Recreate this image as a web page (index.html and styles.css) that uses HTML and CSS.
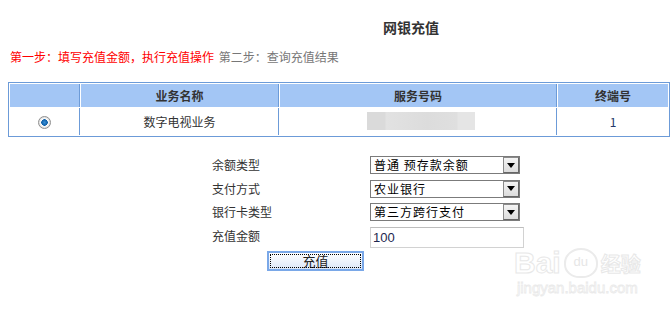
FILE: index.html
```html
<!DOCTYPE html>
<html lang="zh-CN">
<head>
  <meta charset="UTF-8">
  <title>网银充值</title>
  <link rel="stylesheet" href="styles.css">
</head>
<body>
  <div class="page">
    <div class="title">网银充值</div>
    <div class="steps">
      <span class="step-on">第一步：填写充值金额，执行充值操作</span>
      <span class="step-off">第二步：查询充值结果</span>
    </div>

    <table class="biz">
      <tr class="head">
        <td class="c1"></td>
        <td class="c2">业务名称</td>
        <td class="c3">服务号码</td>
        <td class="c4">终端号</td>
      </tr>
      <tr class="data">
        <td class="c1"><span class="radio"></span></td>
        <td class="c2">数字电视业务</td>
        <td class="c3"><span class="masked"></span></td>
        <td class="c4 num">1</td>
      </tr>
    </table>

    <div class="form">
      <div class="row">
        <span class="label">余额类型</span>
        <div class="select"><span class="val">普通 预存款余额</span><span class="arrow"><svg width="8" height="5" viewBox="0 0 8 5"><path d="M0 0h8L4 5z" fill="#000"/></svg></span></div>
      </div>
      <div class="row">
        <span class="label">支付方式</span>
        <div class="select"><span class="val">农业银行</span><span class="arrow"><svg width="8" height="5" viewBox="0 0 8 5"><path d="M0 0h8L4 5z" fill="#000"/></svg></span></div>
      </div>
      <div class="row">
        <span class="label">银行卡类型</span>
        <div class="select"><span class="val">第三方跨行支付</span><span class="arrow"><svg width="8" height="5" viewBox="0 0 8 5"><path d="M0 0h8L4 5z" fill="#000"/></svg></span></div>
      </div>
      <div class="row">
        <span class="label">充值金额</span>
        <input class="amount" type="text" value="100">
      </div>
      <button class="submit">充值</button>
    </div>

    <div class="watermark">
      <div class="wm-logo"><span class="wm-bai">Bai</span><span class="wm-du">du</span><span class="wm-jy">经验</span></div>
      <div class="wm-url">jingyan.baidu.com</div>
    </div>
  </div>
</body>
</html>
```

FILE: styles.css
```css
body {
  margin: 0;
  font-family: "Noto Sans CJK SC", "Liberation Sans", sans-serif;
  font-size: 12px;
  color: #333;
  background: #fff;
}
.page {
  position: relative;
  padding: 20px 0 0 8px;
  height: 298px;
}
.title {
  padding-left: 375px;
  font-size: 14px;
  font-weight: bold;
  line-height: 14px;
}
.steps {
  margin-top: 16px;
  padding-left: 2px;
  line-height: 14px;
}
.step-on {
  color: #ff0000;
}
.step-off {
  color: #777;
  margin-left: 2px;
}
.biz {
  margin-top: 18px;
  width: 662px;
  table-layout: fixed;
  border: 1px solid #6c9bd8;
  border-collapse: separate;
  border-spacing: 1px;
}
.biz td {
  box-sizing: border-box;
  padding: 0;
  text-align: center;
  border-right: 1px solid #6c9bd8;
}
.biz td.c4 {
  border-right: none;
}
.c1 { width: 70px; }
.c2 { width: 198px; }
.c3 { width: 277px; }
.c4 { width: 110px; }
.head td {
  height: 23px;
  background: #a3c6f5;
  font-weight: bold;
}
.data td {
  height: 27px;
}
.num {
  color: #24386a;
}
.radio {
  display: inline-block;
  width: 11px;
  height: 11px;
  border-radius: 50%;
  border: 1px solid #8f8f8f;
  background: radial-gradient(circle, #3a8fd6 0, #0d5fa8 3px, #fff 3.5px, #e6e6e6 5px);
  vertical-align: middle;
  margin-top: -2px;
}
.masked {
  display: inline-block;
  width: 108px;
  height: 18px;
  margin: 0 0 2px 5px;
  vertical-align: middle;
  background: linear-gradient(to right, #dadada 0, #dadada 18px, #e2e2e2 19px, #dcdcdc 60px, #dfdfdf 90px, #e5e5e5 91px);
}
.form {
  margin: 19px 0 0 204px;
}
.row {
  display: flex;
  align-items: flex-start;
  height: 23.5px;
}
.label {
  width: 158px;
  line-height: 18px;
}
.select {
  box-sizing: border-box;
  width: 150px;
  height: 18px;
  border: 1px solid #7b7b7b;
  display: flex;
  align-items: center;
  justify-content: space-between;
  background: #fff;
  color: #000;
}
.val {
  padding-left: 3px;
  letter-spacing: 1px;
  line-height: 16px;
}
.arrow {
  box-sizing: border-box;
  width: 16px;
  height: 16px;
  border: 1px solid #8a8a8a;
  border-right-color: #666;
  border-bottom-color: #666;
  background: linear-gradient(#f4f4f4, #dcdcdc);
  display: flex;
  align-items: center;
  justify-content: center;
}
.amount {
  box-sizing: border-box;
  width: 154px;
  height: 21px;
  margin: 0;
  padding: 0 2px;
  border: 1px solid #d2d2d2;
  border-top-color: #bdbdbd;
  font-family: "Liberation Sans", sans-serif;
  font-size: 13px;
  color: #1e2850;
}
.submit {
  box-sizing: border-box;
  display: block;
  width: 97px;
  height: 20px;
  margin: 1px 0 0 55px;
  padding: 0;
  border: 2px solid #7aa8e8;
  outline: 1px dotted #000;
  outline-offset: -4px;
  background: linear-gradient(#ffffff, #dce7f8);
  font-family: "Noto Sans CJK SC", sans-serif;
  font-size: 13px;
  color: #222;
  line-height: 14px;
}
.watermark {
  position: absolute;
  left: 514px;
  top: 246px;
  color: #eeeeee;
  text-align: center;
}
.wm-logo {
  display: flex;
  align-items: center;
}
.wm-bai {
  font-family: "Liberation Sans", sans-serif;
  font-size: 30px;
  font-weight: bold;
  color: #fff;
  -webkit-text-stroke: 1px #e8e8e8;
}
.wm-du {
  display: inline-block;
  width: 30px;
  height: 26px;
  margin: 0 3px;
  border: 2px solid #ebebeb;
  border-radius: 50% 50% 45% 45%;
  font-family: "Liberation Sans", sans-serif;
  font-size: 13px;
  line-height: 24px;
  color: #e6e6e6;
}
.wm-jy {
  font-size: 20px;
  font-weight: bold;
  color: #fff;
  -webkit-text-stroke: 1px #e8e8e8;
}
.wm-url {
  font-family: "Liberation Sans", sans-serif;
  font-size: 15px;
  color: #fff;
  -webkit-text-stroke: 0.8px #eaeaea;
  line-height: 16px;
}
```
